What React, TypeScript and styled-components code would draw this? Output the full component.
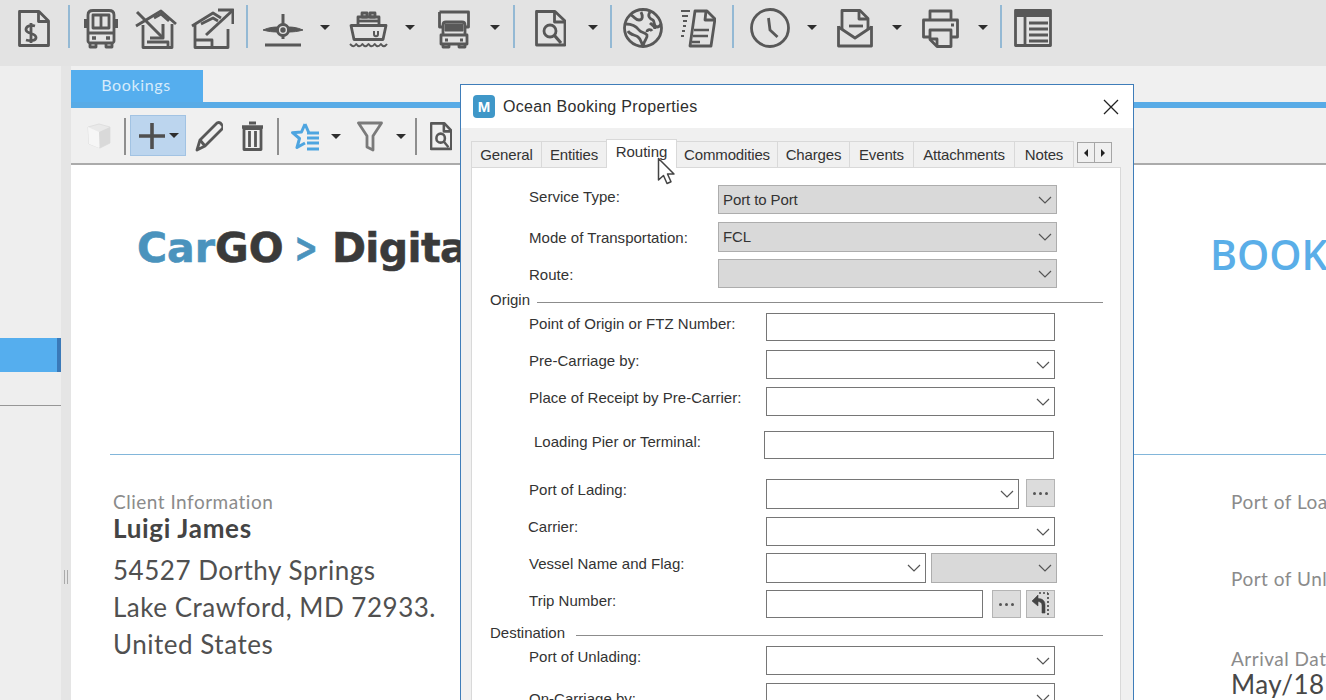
import React from "react";
import styled, { createGlobalStyle } from "styled-components";

const Global = createGlobalStyle`
  html, body { margin: 0; padding: 0; background: #fff; }
  body { font-family: "Liberation Sans", Arial, sans-serif; }
  * { box-sizing: border-box; }
`;

const Page = styled.div`
  position: relative; width: 1326px; height: 700px; overflow: hidden;
  display: flex; flex-direction: column; background: #eeeeee;
`;
const TopBar = styled.div`
  height: 66px; flex: none; display: flex; align-items: flex-start; padding-left: 18px;
  background: #e3e3e3;
`;
const SubBar = styled.div`
  height: 57px; flex: none; display: flex; align-items: flex-start; padding-left: 0;
  background: #f0f0f0; border-bottom: 2px solid #ababab;
`;
const Icon = styled.svg<{ $ml: number }>`
  flex: none; display: block; margin-left: ${p => p.$ml}px;
  fill: none; stroke: #585858; stroke-width: 2.8; stroke-linejoin: round;
`;
const Caret = styled.i<{ $ml: number; $top: number }>`
  flex: none; display: block; width: 0; height: 0;
  margin: ${p => p.$top}px 0 0 ${p => p.$ml}px;
  border-left: 5px solid transparent; border-right: 5px solid transparent;
  border-top: 5px solid #2e2e2e;
`;
const Sep = styled.i<{ $ml: number }>`
  flex: none; display: block; width: 2px; height: 43px; margin: 5px 0 0 ${p => p.$ml}px;
  background: #94b9d4;
`;
const SubSep = styled.i<{ $ml: number }>`
  flex: none; display: block; width: 2px; height: 37px; margin: 10px 0 0 ${p => p.$ml}px;
  background: #8e8e8e;
`;
const ActiveAdd = styled.div`
  flex: none; width: 56px; height: 41px; margin: 7px 0 0 4px; display: flex; align-items: center;
  padding-left: 8px; background: #bcd5ee; border: 1px solid #a2c3e3;
`;
const Body = styled.div`display: flex; flex: 1; min-height: 0;`;
const Sidebar = styled.div`
  width: 61px; flex: none; padding-top: 272px; background: #eeeeee;
`;
const SideActive = styled.div`
  height: 34px; background: #55aeee; border-right: 4px solid #3a79b8;
`;
const SideRule = styled.div`height: 1px; margin-top: 33px; background: #969696;`;
const Splitter = styled.div`
  width: 10px; flex: none; padding: 504px 0 0 3px; background: #e5e5e5;
`;
const Grip = styled.div`
  width: 4px; height: 14px; border-left: 1px solid #aaa; border-right: 1px solid #aaa;
`;
const Main = styled.div`flex: 1; min-width: 0; display: flex; flex-direction: column; background: #f0f0f0;`;
const TabStrip = styled.div`height: 36px; flex: none; padding-top: 4px;`;
const BookTab = styled.div`
  width: 132px; height: 32px; display: flex; align-items: center; justify-content: center;
  padding: 0 2px 3px 0; background: #55aeee; color: #d6ebfb;
  font: 16px/20px Lato, sans-serif; letter-spacing: 0.65px;
`;
const BlueRule = styled.div`height: 6px; flex: none; background: #58abe6;`;
const Doc = styled.div`flex: 1; min-height: 0; background: #fff; color: #444;`;
const Letterhead = styled.div`
  height: 289px; display: grid; grid-template-columns: 1139px 1fr; overflow: hidden;
`;
const Logo = styled.div`
  padding: 58px 0 0 66px; white-space: nowrap;
  font: bold 41px/50px "DejaVu Sans", sans-serif; color: #3a3a3a;
  -webkit-text-stroke: 0.6px currentColor;
`;
const LogoAccent = styled.span`color: #4a93bd;`;
const LogoArrow = styled.span`
  display: inline-block; color: #4a93bd; margin: 0 -6px 0 -8.5px; transform: scaleX(0.68);
`;
const LogoTail = styled.span`letter-spacing: -0.6px;`;
const DocTitle = styled.div`
  padding-top: 63px; white-space: nowrap; overflow: hidden;
  font: 600 41px/52px "Open Sans", sans-serif; color: #5aaee8;
`;
const DocRule = styled.div`height: 1px; margin-left: 39px; background: #82b6da;`;
const Columns = styled.div`display: grid; grid-template-columns: 1160px 1fr; overflow: hidden;`;
const LeftCol = styled.div`padding: 35px 0 0 42px;`;
const RightCol = styled.div`padding-top: 35px; white-space: nowrap;`;
const Caption = styled.div<{ $mt?: number }>`
  margin-top: ${p => p.$mt ?? 0}px;
  font: 19px/24px Lato, sans-serif; color: #8b8b8b; letter-spacing: 0.5px;
`;
const ClientName = styled.div`
  font: bold 26px/28px Lato, sans-serif; color: #444; letter-spacing: 0.7px;
`;
const Address = styled.div`
  margin-top: 10px; font: 26px/37px Lato, sans-serif; color: #505050; letter-spacing: 0.52px;
`;
const DateText = styled.div`
  margin-top: -1px; font: 26px/28px Lato, sans-serif; color: #484848; letter-spacing: 0.5px;
`;

const Dialog = styled.div`
  position: absolute; left: 460px; top: 84px; width: 674px; height: 640px;
  background: #f0f0f0; border: 1px solid #3f7db9;
  display: flex; flex-direction: column;
`;
const TitleBar = styled.div`
  height: 43px; flex: none; display: flex; align-items: center; padding: 0 14px 0 12px;
  background: #fff;
`;
const AppBadge = styled.div`
  width: 22px; height: 23px; border-radius: 4px; background: #3f97c8; color: #fff;
  display: flex; align-items: center; justify-content: center;
  font: bold 15px/1 "Liberation Sans", sans-serif;
`;
const DialogTitle = styled.div`
  margin-left: 8px; flex: 1; font: 16px/20px "Liberation Sans", sans-serif; color: #2e2e2e;
  letter-spacing: 0.32px;
`;
const Tabs = styled.div`
  height: 39px; flex: none; display: flex; align-items: flex-end; padding-left: 11px;
`;
const Tab = styled.div<{ $w: number; $active?: boolean }>`
  width: ${p => p.$w}px; height: ${p => (p.$active ? 29 : 26)}px;
  display: flex; justify-content: center; align-items: ${p => (p.$active ? "flex-start" : "center")};
  padding-top: ${p => (p.$active ? 3 : 1)}px;
  border: 1px solid #d9d9d9; border-bottom: none; margin-left: -1px;
  background: ${p => (p.$active ? "#fff" : "#f0f0f0")};
  font: 15px/18px "Liberation Sans", sans-serif; color: #333; letter-spacing: ${p => (p.$active ? "0" : "-0.15px")};
  position: relative; z-index: ${p => (p.$active ? 1 : 0)};
  margin-bottom: ${p => (p.$active ? -1 : 0)}px;
`;
const ScrollBtn = styled.div<{ $ml: number }>`
  width: 18px; height: 21px; margin: 0 0 4px ${p => p.$ml}px; background: #f0f0f0; border: 1px solid #a6a6a6;
  display: flex; align-items: center; justify-content: center;
`;
const Tri = styled.i<{ $dir: "l" | "r" }>`
  width: 0; height: 0; border-top: 4px solid transparent; border-bottom: 4px solid transparent;
  ${p => (p.$dir === "l" ? "border-right: 4px solid #222;" : "border-left: 4px solid #222;")}
`;
const Panel = styled.div`
  flex: 1; margin: 0 12px 0 10px; background: #fff; border: 1px solid #d9d9d9;
  display: flex; flex-direction: column; overflow: hidden;
`;
const Row = styled.div<{ $mt: number; $pl?: number }>`
  flex: none; display: flex; align-items: flex-start;
  margin-top: ${p => p.$mt}px; padding-left: ${p => p.$pl ?? 57}px;
`;
const Label = styled.div<{ $w: number; $dy: number }>`
  flex: none; width: ${p => p.$w}px; margin-top: ${p => p.$dy}px; white-space: nowrap;
  font: 15px/18px "Liberation Sans", sans-serif; color: #333; letter-spacing: 0.02px;
`;
const TextBox = styled.div<{ $w: number; $h: number }>`
  flex: none; width: ${p => p.$w}px; height: ${p => p.$h}px;
  background: #fff; border: 1.5px solid #767676;
`;
const Select = styled.div<{ $w: number; $h: number; $off?: boolean; $ml?: number }>`
  flex: none; width: ${p => p.$w}px; height: ${p => p.$h}px; margin-left: ${p => p.$ml ?? 0}px;
  display: flex; align-items: center; justify-content: space-between; padding: 0 4.5px 0 4px;
  background: ${p => (p.$off ? "#d9d9d9" : "#fff")};
  border: 1.5px solid ${p => (p.$off ? "#adadad" : "#767676")};
  font: 15px/18px "Liberation Sans", sans-serif; color: #333; letter-spacing: -0.1px;
`;
const MoreBtn = styled.div<{ $ml: number }>`
  flex: none; width: 29px; height: 28px; margin-left: ${p => p.$ml}px;
  display: flex; align-items: center; justify-content: center; gap: 3px;
  background: #dcdcdc; border: 1px solid #b4b4b4;
`;
const Dot = styled.i`width: 3px; height: 3px; background: #555; border-radius: 50%;`;
const SectionHead = styled.div<{ $mt: number; $gap: number }>`
  flex: none; height: 18px; display: flex; align-items: center; gap: ${p => p.$gap}px;
  margin-top: ${p => p.$mt}px; padding: 0 17px 0 18px;
  font: 15px/18px "Liberation Sans", sans-serif; color: #333;
`;
const SectionLine = styled.i`flex: 1; height: 1px; margin-top: 4px; background: #8c8c8c;`;
const Cursor = styled.svg`position: absolute; left: 196px; top: 72px; z-index: 2;`;

const Chevron = () => (
  <svg width="14" height="8" viewBox="0 0 14 8" fill="none" stroke="#555" strokeWidth="1.2">
    <path d="M1 1l6 6 6-6" />
  </svg>
);

type IcProps = { w: number; ml: number; h?: number; children: React.ReactNode };
const Ic = ({ w, ml, h = 56, children }: IcProps) => (
  <Icon $ml={ml} width={w} height={h} viewBox={`0 0 ${w} ${h}`}>{children}</Icon>
);

const DocSearchShape = () => (
  <>
    <path d="M1.500 11.500H20L30 21V45H1.500Z" />
    <path d="M19.500 11.500V22H30" />
    <circle cx="15" cy="31" r="6" />
    <path d="M19.500 35.500L26 43" strokeWidth="3.200" />
  </>
);

export default function App() {
  return (
    <Page>
      <Global />
      <TopBar>
        <Ic w={32} ml={0}>
          <path d="M1.500 11.500H21L30.500 21V45.500H1.500Z" />
          <path d="M20.500 11.500V21.500H30.500" />
          <path d="M17 26c-5-1.500-9 .5-9 3.500 0 5 10 3 10 8 0 3-5 4-10 2.500M13 23v20" strokeWidth="2.800" />
        </Ic>
        <Sep $ml={18} />
        <Ic w={34} ml={14}>
          <path d="M4 41V15c0-3 2-4.500 5-4.500h16c3 0 5 1.500 5 4.500v26c0 1-1 2-2 2H6c-1 0-2-1-2-2Z" />
          <path d="M1.500 19v9M32.500 19v9" strokeWidth="3" />
          <rect x="9" y="15" width="16" height="13" />
          <path d="M17 15v13M4 33h26" />
          <path d="M8 38h4M22 38h4" strokeWidth="3.500" />
          <path d="M6 43v4h6v-4M22 43v4h6v-4" />
        </Ic>
        <Ic w={42} ml={17}>
          <path d="M1 26L26 11l15 13" />
          <path d="M8 25v22.500h29V24" />
          <path d="M12 42h21v5" />
          <path d="M2 12l26 26" strokeWidth="3" />
          <path d="M28 24v14H15" strokeWidth="3" />
          <path d="M19 18l7-4 8 7" />
        </Ic>
        <Ic w={43} ml={14}>
          <path d="M1 26L22 13l8 5" />
          <path d="M4 25v22.500h33V29" />
          <path d="M4 40h17v7" />
          <path d="M15 35L41 11" strokeWidth="3" />
          <path d="M27 10h15v14" strokeWidth="3" />
          <path d="M10 24l12-6 5 3" />
        </Ic>
        <Sep $ml={12} />
        <Ic w={40} ml={15}>
          <path d="M20 14v10" strokeWidth="3" />
          <path d="M0 30c6-2.500 10-3 15-3v5c-5 0-10-.5-15-2ZM40 30c-6-2.500-10-3-15-3v5c5 0 10-.5 15-2Z" fill="#585858" strokeWidth="1" />
          <circle cx="20" cy="30" r="5.500" />
          <circle cx="20" cy="30" r="1.300" fill="#585858" />
          <path d="M20 36v3M2 45h36" strokeWidth="3" />
        </Ic>
        <Caret $ml={17} $top={25} />
        <Ic w={39} ml={19}>
          <path d="M9 25V17h21v8" />
          <path d="M13 13h5v4h-5zM21 13h5v4h-5z" />
          <path d="M9 21h21" />
          <path d="M2 25.500h35l-3 14H5Z" />
          <path d="M25 31v3c0 3 4 3 4 0v-3" strokeWidth="2" />
          <path d="M1 44c3 3 4 3 6.200 0 2 3 4 3 6.200 0 2 3 4 3 6.100 0 2 3 4 3 6.200 0 2 3 4 3 6.200 0 2 3 4 3 6.100 0" strokeWidth="2" />
        </Ic>
        <Caret $ml={17} $top={25} />
        <Ic w={32} ml={23}>
          <path d="M1.500 12h29v15h-3" />
          <path d="M1.500 12v15h3" />
          <path d="M5 36V25c0-2 1-3 3-3h16c2 0 3 1 3 3v11" />
          <path d="M7 24h18v7H7z" fill="#585858" strokeWidth="1" />
          <path d="M3 35h26v9H3z" />
          <path d="M7 40h3M22 40h3" strokeWidth="3" />
          <path d="M5 44v3h6v-3M21 44v3h6v-3" />
        </Ic>
        <Caret $ml={20} $top={25} />
        <Sep $ml={13} />
        <Ic w={31} ml={20}><DocSearchShape /></Ic>
        <Caret $ml={22} $top={25} />
        <Sep $ml={12} />
        <Ic w={40} ml={11}>
          <circle cx="20" cy="28" r="18.500" />
          <path d="M8 15c4 2 4 5 8 5s4-4 2-8M3 24c5 0 10 2 13 6 2 3 6 2 8 5 1 3-3 5-4 11-2-4-2-7-5-9-2-2-8-2-10-6" />
          <path d="M27 12c-3 4 0 7 3 8 2 2 0 6 4 7 2 0 3-1 4-3M27 23c2 2 5 3 5 6" />
          <path d="M24 32c0-3 4-3 5-1" />
        </Ic>
        <Ic w={36} ml={17}>
          <path d="M10 46L15 11h12l8 8-4 27Z" />
          <path d="M26 11l-1 9h9" />
          <path d="M14 30h15M13 36h15M12 42h8" strokeWidth="2.400" />
          <path d="M1 11h9M2 16h6M3 21h4M3 26h3M2 31h3M1 36h3" strokeWidth="2" />
        </Ic>
        <Sep $ml={16} />
        <Ic w={40} ml={16}>
          <circle cx="20" cy="28" r="18.500" />
          <path d="M18.500 18l1.500 12 7.500 7" />
        </Ic>
        <Caret $ml={17} $top={25} />
        <Ic w={36} ml={20}>
          <path d="M5 30V10.500h18l8 8V30" />
          <path d="M22 11v8h9" />
          <path d="M12 26h14" />
          <path d="M1.500 26v20h33V26" />
          <path d="M1.500 27L18 38l16.500-11" />
        </Ic>
        <Caret $ml={19} $top={25} />
        <Ic w={37} ml={20}>
          <path d="M8 20V11h21v9" />
          <path d="M8 37H1.500V20h34v17H29" />
          <path d="M8 30h21v16.500H15l-7-7Z" />
          <path d="M8 39h7v7" />
          <path d="M29 25h3" strokeWidth="3" />
        </Ic>
        <Caret $ml={19} $top={25} />
        <Sep $ml={12} />
        <Ic w={38} ml={12}>
          <path d="M1.500 10.500h35v35h-35Z" />
          <path d="M1.500 14h35" strokeWidth="6" />
          <path d="M11 17v28" />
          <path d="M15 23h19M15 29h19M15 35h19M15 41h19" strokeWidth="3" />
        </Ic>
      </TopBar>
      <Body>
        <Sidebar>
          <SideActive />
          <SideRule />
        </Sidebar>
        <Splitter><Grip /></Splitter>
        <Main>
          <TabStrip><BookTab>Bookings</BookTab></TabStrip>
          <BlueRule />
          <SubBar>
            <Ic w={24} ml={16} h={54}>
              <path d="M1 19l11-3 11 3v16l-10 5-11-4Z" fill="#e9e9e9" stroke="#dfdfdf" strokeWidth="1" />
              <path d="M12 24l11-5v16l-10 5Z" fill="#d9d9d9" stroke="none" />
              <path d="M1 19l11 5v16l-10-4Z" fill="#f6f6f6" stroke="none" />
            </Ic>
            <SubSep $ml={13} />
            <ActiveAdd>
              <svg width="26" height="26" viewBox="0 0 26 26" fill="none" stroke="#4f4f4f" strokeWidth="3.600"><path d="M13 0v26M0 13h26" /></svg>
              <Caret $ml={4} $top={0} />
            </ActiveAdd>
            <Ic w={28} ml={9} h={54}>
              <path d="M2 42l3-10L22 15c2-1 4 0 5 2 1 1 1 3 0 4L10 38Z" />
              <path d="M5 32l5 6" />
            </Ic>
            <Ic w={23} ml={18} h={54}>
              <path d="M1 19h21" strokeWidth="3.500" />
              <path d="M8 15h7" strokeWidth="3" />
              <path d="M3 20.500h17v21H3Z" />
              <path d="M8.500 23v16M14.500 23v16" />
            </Ic>
            <SubSep $ml={13} />
            <Ic w={29} ml={12} h={54}>
              <path d="M14 16l3.500 8h-0.500M14 16l-3.500 8-9 .7 7 5.800-2.500 9 8-4.500" stroke="#4ea5e0" strokeWidth="3" />
              <path d="M16 25h12M16 30h12M16 35h12M16 41h12" stroke="#4ea5e0" strokeWidth="3" />
            </Ic>
            <Caret $ml={11} $top={26} />
            <Ic w={26} ml={16} h={54}>
              <path d="M1.500 15h23L16 28v14l-6-3V28Z" stroke="#7a7a7a" strokeWidth="2.800" />
            </Ic>
            <Caret $ml={13} $top={26} />
            <SubSep $ml={9} />
            <Ic w={22} ml={13} h={54}>
              <g transform="translate(0 6.600) scale(0.71 0.76)" strokeWidth="3.600"><DocSearchShape /></g>
            </Ic>
          </SubBar>
          <Doc>
            <Letterhead>
              <Logo><LogoAccent>Car</LogoAccent>GO <LogoArrow>&gt;</LogoArrow> <LogoTail>Digital</LogoTail></Logo>
              <DocTitle>BOOKING</DocTitle>
            </Letterhead>
            <DocRule />
            <Columns>
              <LeftCol>
                <Caption>Client Information</Caption>
                <ClientName>Luigi James</ClientName>
                <Address>54527 Dorthy Springs<br />Lake Crawford, MD 72933.<br />United States</Address>
              </LeftCol>
              <RightCol>
                <Caption>Port of Loading</Caption>
                <Caption $mt={53}>Port of Unlading</Caption>
                <Caption $mt={56}>Arrival Date</Caption>
                <DateText>May/18</DateText>
              </RightCol>
            </Columns>
          </Doc>
        </Main>
      </Body>

      <Dialog>
        <TitleBar>
          <AppBadge>M</AppBadge>
          <DialogTitle>Ocean Booking Properties</DialogTitle>
          <svg width="16" height="16" viewBox="0 0 16 16" stroke="#222" strokeWidth="1.300" fill="none"><path d="M1 1l14 14M15 1L1 15" /></svg>
        </TitleBar>
        <Tabs>
          <Tab $w={71}>General</Tab>
          <Tab $w={66}>Entities</Tab>
          <Tab $w={71} $active>Routing</Tab>
          <Tab $w={102}>Commodities</Tab>
          <Tab $w={73}>Charges</Tab>
          <Tab $w={65}>Events</Tab>
          <Tab $w={102}>Attachments</Tab>
          <Tab $w={60}>Notes</Tab>
          <ScrollBtn $ml={3}><Tri $dir="l" /></ScrollBtn>
          <ScrollBtn $ml={-1}><Tri $dir="r" /></ScrollBtn>
        </Tabs>
        <Panel>
          <Row $mt={17}><Label $w={189} $dy={3}>Service Type:</Label><Select $w={339} $h={29} $off>Port to Port<Chevron /></Select></Row>
          <Row $mt={8}><Label $w={189} $dy={7}>Mode of Transportation:</Label><Select $w={339} $h={30} $off>FCL<Chevron /></Select></Row>
          <Row $mt={7}><Label $w={189} $dy={7}>Route:</Label><Select $w={339} $h={29} $off><span /><Chevron /></Select></Row>
          <SectionHead $mt={3} $gap={7}>Origin<SectionLine /></SectionHead>
          <Row $mt={4}><Label $w={237} $dy={2}>Point of Origin or FTZ Number:</Label><TextBox $w={289} $h={28} /></Row>
          <Row $mt={9}><Label $w={237} $dy={2}>Pre-Carriage by:</Label><Select $w={289} $h={29}><span /><Chevron /></Select></Row>
          <Row $mt={8}><Label $w={237} $dy={2}>Place of Receipt by Pre-Carrier:</Label><Select $w={289} $h={29}><span /><Chevron /></Select></Row>
          <Row $mt={15} $pl={62}><Label $w={230} $dy={2}>Loading Pier or Terminal:</Label><TextBox $w={290} $h={28} /></Row>
          <Row $mt={20}><Label $w={237} $dy={2}>Port of Lading:</Label><Select $w={253} $h={30}><span /><Chevron /></Select><MoreBtn $ml={7}><Dot /><Dot /><Dot /></MoreBtn></Row>
          <Row $mt={8} $pl={56}><Label $w={238} $dy={1}>Carrier:</Label><Select $w={289} $h={29}><span /><Chevron /></Select></Row>
          <Row $mt={7}><Label $w={237} $dy={2}>Vessel Name and Flag:</Label><Select $w={160} $h={30}><span /><Chevron /></Select><Select $w={126} $h={30} $ml={5} $off><span /><Chevron /></Select></Row>
          <Row $mt={7}><Label $w={237} $dy={2}>Trip Number:</Label><TextBox $w={217} $h={28} /><MoreBtn $ml={9}><Dot /><Dot /><Dot /></MoreBtn>
            <MoreBtn $ml={5}>
              <svg width="22" height="24" viewBox="0 0 22 24" fill="none" stroke="#444">
                <path d="M2 9l6-6v3.500c5 0 7 3 7 6V21h-3v-8c0-2-2-3.500-4-3.500V14Z" fill="#444" strokeWidth="0.600" />
                <path d="M18 1v22M9 1h9" strokeWidth="1.600" strokeDasharray="2 2" />
              </svg>
            </MoreBtn>
          </Row>
          <SectionHead $mt={6} $gap={11}>Destination<SectionLine /></SectionHead>
          <Row $mt={4}><Label $w={237} $dy={2}>Port of Unlading:</Label><Select $w={289} $h={29}><span /><Chevron /></Select></Row>
          <Row $mt={8}><Label $w={237} $dy={7}>On-Carriage by:</Label><Select $w={289} $h={29}><span /><Chevron /></Select></Row>
        </Panel>
        <Cursor width="20" height="28" viewBox="0 0 20 28">
          <path d="M1.500 1.500V23l5-4.500 3.500 8 4-1.800-3.500-7.700H17Z" fill="#fff" stroke="#444" strokeWidth="1.500" strokeLinejoin="round" />
        </Cursor>
      </Dialog>
    </Page>
  );
}
